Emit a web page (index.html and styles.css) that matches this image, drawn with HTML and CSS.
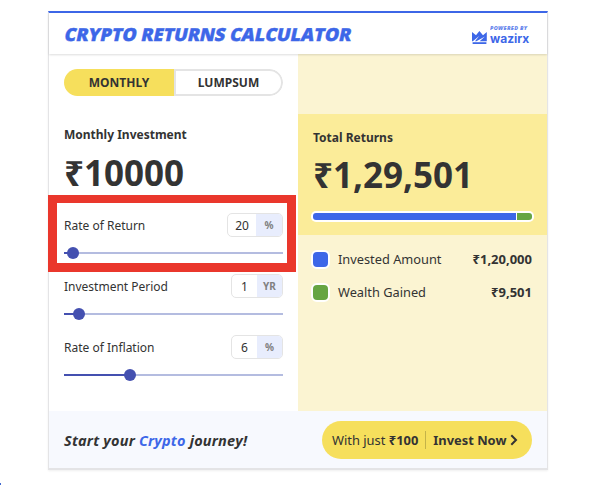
FILE: index.html
```
<!DOCTYPE html>
<html lang="en">
<head>
    <meta charset="UTF-8">
    <title>Crypto Returns Calculator</title>
    <meta name="viewport" content="width=device-width, initial-scale=1.0">
    <link rel="stylesheet" href="styles.css">
</head>
<body>
    <div class="calculator">
        <div class="header">
            <h1>CRYPTO RETURNS CALCULATOR</h1>
            <div class="brand">
                <svg class="crown" viewBox="0 0 15 13">
                    <path d="M0 1 L4 4.2 L7.4 0 L11 4.2 L14.8 1 V10.2 H7.6 L13 5.4 L4.4 10.2 H3 L7.2 5 L0.8 10.2 H0 Z"/>
                    <path d="M0.6 11.2 H14.4 V13 H0.6 Z"/>
                </svg>
                <div class="brand-text">
                    <span class="powered">POWERED BY</span>
                    <span class="brand-name">wazirx</span>
                </div>
            </div>
        </div>
        <div class="main">
            <div class="inputs">
                <div class="toggle">
                    <button class="active">MONTHLY</button>
                    <button>LUMPSUM</button>
                </div>
                <div class="label">Monthly Investment</div>
                <div class="amount">₹10000</div>
                <div class="field">
                    <div class="field-row">
                        <span>Rate of Return</span>
                        <div class="value-box wide"><span class="value">20</span><span class="unit">%</span></div>
                    </div>
                    <div class="slider"><div class="fill" style="width: 9px"></div></div>
                    <div class="highlight"></div>
                </div>
                <div class="field">
                    <div class="field-row">
                        <span>Investment Period</span>
                        <div class="value-box"><span class="value">1</span><span class="unit">YR</span></div>
                    </div>
                    <div class="slider"><div class="fill" style="width: 15px"></div></div>
                </div>
                <div class="field">
                    <div class="field-row">
                        <span>Rate of Inflation</span>
                        <div class="value-box"><span class="value">6</span><span class="unit">%</span></div>
                    </div>
                    <div class="slider"><div class="fill" style="width: 66px"></div></div>
                </div>
            </div>
            <div class="results">
                <div class="total">
                    <div class="label">Total Returns</div>
                    <div class="amount">₹1,29,501</div>
                    <div class="bar">
                        <div class="bar-invested"></div>
                        <div class="bar-gained" style="width: 15px"></div>
                    </div>
                </div>
                <div class="legend">
                    <span class="swatch invested"></span>
                    <span>Invested Amount</span>
                    <b>₹1,20,000</b>
                </div>
                <div class="legend">
                    <span class="swatch gained"></span>
                    <span>Wealth Gained</span>
                    <b>₹9,501</b>
                </div>
            </div>
        </div>
        <div class="footer">
            <div class="tagline">Start your <span>Crypto</span> journey!</div>
            <button class="invest-btn">
                <span class="just">With just <b>₹100</b></span>
                <b class="now">Invest Now</b>
                <svg class="chevron" viewBox="0 0 8 12"><path d="M1.3 1.3 L6 6 L1.3 10.7"/></svg>
            </button>
        </div>
    </div>
    <div class="corner"></div>
</body>
</html>
```

FILE: styles.css
```
* {
    box-sizing: border-box;
}
body {
    font-family: 'Noto Sans', 'Open Sans', sans-serif;
    background: #fff;
    color: #333;
    margin: 0;
    padding: 11px 0 0 48px;
    height: 485px;
    overflow: hidden;
}
button {
    font-family: inherit;
    color: inherit;
    border: none;
    padding: 0;
}
.calculator {
    width: 500px;
    height: 459px;
    border: 1px solid #e4e4e6;
    border-top: 2px solid #3d67e8;
    border-bottom-width: 2px;
    box-shadow: 0 1px 2px #0001;
}
.header {
    position: relative;
    height: 41px;
    display: flex;
    align-items: center;
    justify-content: space-between;
    padding: 0 18px 0 15px;
    box-shadow: 0 1px 2px #0002;
}
.header h1 {
    margin: 1px 0 0 1px;
    font-family: 'Open Sans', 'Noto Sans', sans-serif;
    font-size: 18px;
    font-weight: 800;
    color: #3d67e8;
    white-space: nowrap;
    transform: skewX(-12deg);
    -webkit-text-stroke: 0.4px #3d67e8;
}
.brand {
    display: flex;
    align-items: flex-end;
    gap: 3px;
    color: #3d67e8;
    margin-top: 2px;
}
.crown {
    width: 15px;
    height: 13px;
    fill: #3d67e8;
}
.brand-text {
    display: flex;
    flex-direction: column;
    width: 39px;
    white-space: nowrap;
}
.powered {
    font-family: 'Open Sans', sans-serif;
    font-size: 5.5px;
    line-height: 7px;
    font-style: italic;
    font-weight: 800;
    letter-spacing: 0.3px;
    opacity: 0.8;
    margin-bottom: 1px;
}
.brand-name {
    font-family: Inter, sans-serif;
    font-size: 12px;
    line-height: 11px;
    font-weight: 700;
}
.main {
    display: flex;
    height: 357px;
}
.inputs {
    width: 249px;
    padding: 15px 15px 0;
}
.toggle {
    display: flex;
    height: 27px;
    border-radius: 14px;
    overflow: hidden;
}
.toggle button {
    flex: 1;
    background: #fff;
    border: 2px solid #e4e4e4;
    border-radius: 0 14px 14px 0;
    font-size: 12px;
    font-weight: 700;
}
.toggle .active {
    flex: 0 0 110px;
    border: none;
    border-radius: 0;
    background: #f6df5c;
}
.label {
    font-size: 12px;
    line-height: 18px;
    font-weight: 700;
}
.inputs .label {
    margin-top: 30px;
}
.amount {
    font-size: 35px;
    line-height: 48px;
    font-weight: 700;
    white-space: nowrap;
}
.inputs .amount {
    margin: 5px 0 16px;
}
.field {
    position: relative;
    height: 61px;
}
.field-row {
    display: flex;
    align-items: center;
    justify-content: space-between;
    height: 24px;
    font-size: 12px;
}
.value-box {
    display: flex;
    width: 52px;
    height: 24px;
    border: 1px solid #e4e4e4;
    border-radius: 5px;
    overflow: hidden;
    line-height: 23px;
    text-align: center;
}
.value-box.wide {
    width: 56px;
}
.value {
    flex: 1;
}
.unit {
    width: 25px;
    background: #e8edfd;
    color: #808080;
    font-size: 10px;
    font-weight: 700;
}
.wide .unit {
    width: 26px;
}
.slider {
    height: 2px;
    margin-top: 15px;
    background: #b4bce0;
}
.fill {
    position: relative;
    height: 2px;
    background: #4450b0;
}
/* slider thumb */
.fill::after {
    content: '';
    position: absolute;
    right: -6px;
    top: -5px;
    width: 12px;
    height: 12px;
    border-radius: 50%;
    background: #4450b0;
}
.highlight {
    position: absolute;
    left: -16px;
    top: -18px;
    width: 248px;
    height: 77px;
    border: 9px solid #ea372c;
    border-top-width: 8px;
}
.results {
    width: 249px;
    padding-top: 60px;
    background: #fbf4d2;
}
.total {
    height: 121px;
    padding: 15px 13px 0;
    margin-bottom: 8px;
    background: #fbec99;
}
.total .label, .total .amount {
    margin-left: 2px;
}
.total .amount {
    margin-top: 4px;
}
.bar {
    display: flex;
    gap: 1px;
    height: 11px;
    margin-top: 12px;
    padding: 2px;
    border-radius: 5px;
    background: #fff;
}
.bar-invested {
    flex: 1;
    background: #3d67e8;
    border-radius: 3px 0 0 3px;
}
.bar-gained {
    background: #66a543;
    border-radius: 0 3px 3px 0;
}
.legend {
    display: flex;
    align-items: center;
    height: 33px;
    padding: 0 15px 0 13px;
    font-size: 12.8px;
}
.legend b {
    margin-left: auto;
    font-size: 13px;
}
.legend span, .legend b {
    line-height: 17px;
}
.swatch {
    width: 19px;
    height: 19px;
    margin-right: 8px;
    border: 2px solid #fff;
    border-radius: 6px;
}
.invested {
    background: #3d67e8;
}
.gained {
    background: #66a543;
}
.footer {
    display: flex;
    align-items: center;
    justify-content: space-between;
    height: 57px;
    padding: 0 15px;
    background: #f7f9fe;
}
.tagline {
    font-family: 'Open Sans', 'Noto Sans', sans-serif;
    font-size: 14.5px;
    font-style: italic;
    font-weight: 700;
    letter-spacing: 0.2px;
    margin-top: 2px;
}
.tagline span {
    color: #3d67e8;
}
.invest-btn {
    display: flex;
    align-items: center;
    width: 210px;
    height: 38px;
    padding-left: 10px;
    border-radius: 19px;
    background: #f6df5c;
    font-size: 12.9px;
    white-space: nowrap;
}
.just {
    line-height: 18px;
    padding-right: 7px;
    border-right: 1px solid #c4b349;
}
.now {
    padding-left: 7px;
}
.chevron {
    width: 8px;
    height: 12px;
    margin-left: 4px;
    fill: none;
    stroke: #333;
    stroke-width: 2;
}
/* edge of the page tab below the fold */
.corner {
    position: absolute;
    left: 0;
    bottom: 0;
    width: 1px;
    height: 2px;
    background: #4169d0;
}
```
